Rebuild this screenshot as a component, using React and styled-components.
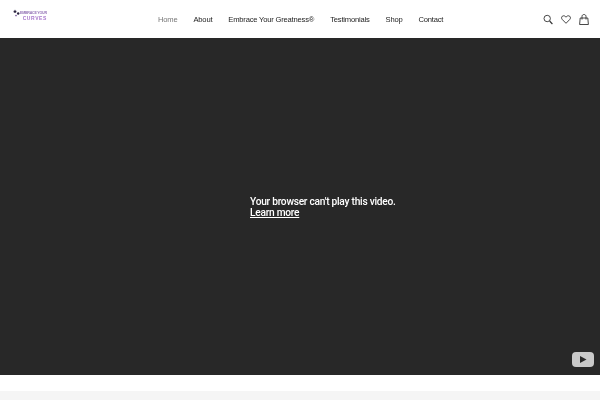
import React from "react";
import styled, { createGlobalStyle } from "styled-components";

const Global = createGlobalStyle`
  html, body { margin: 0; padding: 0; background: #fff; overflow: hidden; }
  #root { width: 600px; height: 400px; }
  * { box-sizing: border-box; }
`;
const Page = styled.div`
  width: 600px; height: 400px; display: flex; flex-direction: column; background: #fff;
`;
const Header = styled.header`
  height: 38px; display: grid; grid-template-columns: 1fr auto 1fr; align-items: center;
  padding: 0 11px 0 13px; background: #fff;
`;
const Logo = styled.a`
  display: flex; align-items: flex-start; margin: -9px 0 0 0; will-change: transform;
`;
const LogoStars = styled.svg`
  width: 7px; height: 8px; flex: none;
`;
const LogoText = styled.div`
  display: flex; flex-direction: column; align-items: stretch; width: 27px; margin-top: 2px;
  font-family: "Liberation Sans", sans-serif; font-weight: 700; line-height: 4.5px;
  white-space: nowrap;
`;
const LogoTop = styled.span`
  color: #9272b5; font-size: 3.6px; letter-spacing: -0.22px;
`;
const LogoBottom = styled.span`
  color: #a878cc; font-size: 5px; letter-spacing: 0.6px; text-align: right;
`;
const Nav = styled.nav`
  display: flex; align-items: center; gap: 16px; margin-top: 1px; will-change: transform;
`;
const NavLink = styled.a`
  font-family: "Liberation Sans", Arial, sans-serif; font-size: 7.6px; letter-spacing: -0.2px; line-height: 12px;
  color: ${p => (p.$active ? "#777" : "#1c1c1c")}; white-space: nowrap;
`;
const Icons = styled.div`
  display: flex; align-items: center; justify-content: flex-end; gap: 8px;
`;
const IconSvg = styled.svg`
  width: 10px; height: 11px; fill: none; stroke: #333; stroke-width: 0.9;
`;
const Video = styled.section`
  height: 337px; background: #282828; position: relative; display: flex; align-items: center;
  padding-left: 250px;
`;
const Message = styled.div`
  font-family: Roboto, "Liberation Sans", sans-serif; font-size: 10.2px; font-weight: 500; letter-spacing: -0.26px; line-height: 11px;
  color: #fff; margin-top: 1px; white-space: nowrap; will-change: transform;
`;
const Learn = styled.a`
  color: #fff; text-decoration: underline; display: block;
`;
const YouTube = styled.svg`
  position: absolute; right: 6px; bottom: 8px; width: 22px; height: 15px;
`;
const Gap = styled.div`
  height: 16px; background: #fff;
`;
const Next = styled.div`
  flex: 1; background: #f5f5f5;
`;

export default function App() {
  const items = ["About", "Embrace Your Greatness®", "Testimonials", "Shop", "Contact"];
  return (
    <Page>
      <Global />
      <Header>
        <Logo>
          <LogoStars viewBox="0 0 7 8">
            <path d="M2 .5l.6 1.2L4 1.9 3 2.8l.2 1.3L2 3.5l-1.2.6L1 2.8 0 1.9l1.4-.2z" fill="#2b2440" />
            <circle cx="5.2" cy="4.5" r="1.2" fill="#2b2440" />
            <circle cx="3" cy="6.6" r="0.8" fill="#6b4a90" />
          </LogoStars>
          <LogoText>
            <LogoTop>EMBRACE YOUR</LogoTop>
            <LogoBottom>CURVES</LogoBottom>
          </LogoText>
        </Logo>
        <Nav>
          <NavLink $active>Home</NavLink>
          {items.map(i => <NavLink key={i}>{i}</NavLink>)}
        </Nav>
        <Icons>
          <IconSvg viewBox="0 0 10 11">
            <circle cx="4.2" cy="4.5" r="3.2" />
            <path d="M6.6 7l2.8 3" strokeWidth="1.1" />
          </IconSvg>
          <IconSvg viewBox="0 0 10 11">
            <path d="M5 9.3L1.2 5.4C0 4.1.5 2 2.4 1.8c1.1-.1 2 .4 2.6 1.4.6-1 1.5-1.5 2.6-1.4 1.9.2 2.4 2.3 1.2 3.6z" />
          </IconSvg>
          <IconSvg viewBox="0 0 10 11">
            <path d="M1.2 4h7.6l.6 6.5H.6z" />
            <path d="M3 5.5V2.5C3 1.2 3.9.5 5 .5s2 .7 2 2v3" />
          </IconSvg>
        </Icons>
      </Header>
      <Video>
        <Message>
          Your browser can't play this video.
          <Learn>Learn more</Learn>
        </Message>
        <YouTube viewBox="0 0 22 15">
          <rect x="0" y="0" width="22" height="15" rx="4" fill="#c9c9c9" />
          <path d="M8 4l6.5 3.5L8 11z" fill="#282828" />
        </YouTube>
      </Video>
      <Gap />
      <Next />
    </Page>
  );
}
